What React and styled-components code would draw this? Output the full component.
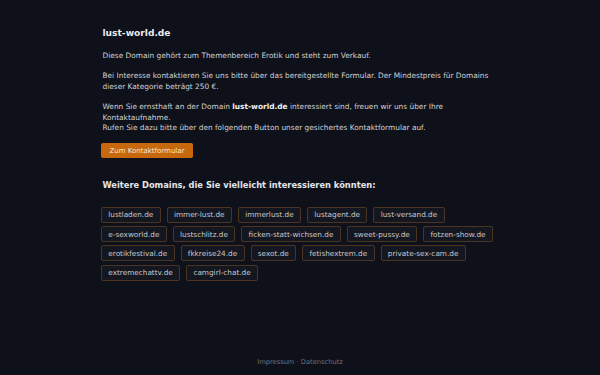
import React from "react";
import styled, { createGlobalStyle } from "styled-components";

const GlobalStyle = createGlobalStyle`
  html, body {
    margin: 0;
    padding: 0;
    background: #0f111a;
  }
  body {
    font-family: "DejaVu Sans", Verdana, sans-serif;
    color: #d4d6dc;
  }
`;

const Page = styled.div`
  min-height: 375px;
  display: flex;
  flex-direction: column;
  align-items: center;
`;

const Main = styled.main`
  width: 398px;
  padding: 28px 0 0;
  flex: 1;
`;

const Title = styled.h1`
  font-size: 9.1px;
  line-height: 11px;
  font-weight: bold;
  color: #e8eaee;
  margin: 0 0 12px 1.5px;
`;

const Text = styled.p`
  font-size: 7.4px;
  line-height: 10.5px;
  margin: 0 0 9.8px 1.5px;
  color: #cfd1d7;

  strong {
    color: #f2f3f6;
  }
`;

const Button = styled.button`
  display: block;
  font-family: inherit;
  font-size: 7px;
  color: #f6e8d8;
  background: #c8680e;
  border: none;
  border-radius: 2px;
  padding: 0 8.5px;
  height: 15px;
  margin-top: 1.5px;
  cursor: pointer;
`;

const SubTitle = styled.h2`
  font-size: 8.3px;
  line-height: 10px;
  font-weight: bold;
  color: #e4e6ea;
  margin: 22px 0 16.5px 1.5px;
`;

const Chips = styled.div`
  display: flex;
  flex-wrap: wrap;
  gap: 3.3px 6px;
`;

const Chip = styled.a`
  font-size: 7.3px;
  color: #c6c8ce;
  background: #151720;
  border: 1px solid #4b3522;
  border-radius: 2px;
  height: 16px;
  box-sizing: border-box;
  padding: 0 6.3px;
  display: flex;
  align-items: center;
  text-decoration: none;
`;

const Footer = styled.footer`
  font-size: 6.7px;
  color: #6e727e;
  padding: 0 0 9px;
  text-align: center;
`;

const domains = [
  "lustladen.de",
  "immer-lust.de",
  "immerlust.de",
  "lustagent.de",
  "lust-versand.de",
  "e-sexworld.de",
  "lustschlitz.de",
  "ficken-statt-wichsen.de",
  "sweet-pussy.de",
  "fotzen-show.de",
  "erotikfestival.de",
  "fkkreise24.de",
  "sexot.de",
  "fetishextrem.de",
  "private-sex-cam.de",
  "extremechattv.de",
  "camgirl-chat.de",
];

const App = () => {
  return (
    <Page>
      <GlobalStyle />
      <Main>
        <Title>lust-world.de</Title>
        <Text>Diese Domain gehört zum Themenbereich Erotik und steht zum Verkauf.</Text>
        <Text>
          Bei Interesse kontaktieren Sie uns bitte über das bereitgestellte Formular. Der
          Mindestpreis für Domains dieser Kategorie beträgt 250 €.
        </Text>
        <Text>
          Wenn Sie ernsthaft an der Domain <strong>lust-world.de</strong> interessiert sind,
          freuen wir uns über Ihre Kontaktaufnahme.
          <br />
          Rufen Sie dazu bitte über den folgenden Button unser gesichertes Kontaktformular auf.
        </Text>
        <Button>Zum Kontaktformular</Button>
        <SubTitle>Weitere Domains, die Sie vielleicht interessieren könnten:</SubTitle>
        <Chips>
          {domains.map((d) => (
            <Chip key={d} href="#">
              {d}
            </Chip>
          ))}
        </Chips>
      </Main>
      <Footer>Impressum · Datenschutz</Footer>
    </Page>
  );
};

export default App;
